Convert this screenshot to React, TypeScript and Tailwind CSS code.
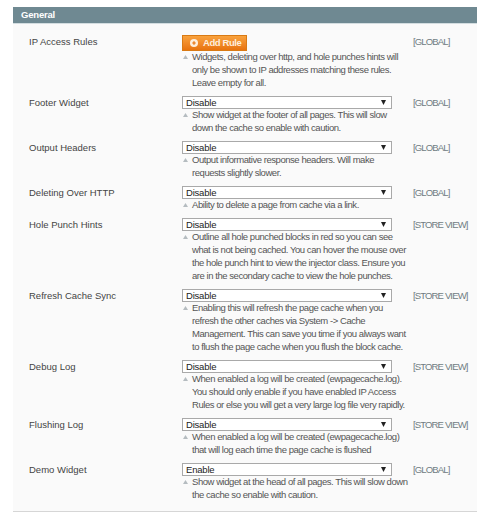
const rows = [
  {
    label: "IP Access Rules",
    scope: "[GLOBAL]",
    note: ["Widgets, deleting over http, and hole punches hints will", "only be shown to IP addresses matching these rules.", "Leave empty for all."],
  },
  {
    label: "Footer Widget",
    value: "Disable",
    scope: "[GLOBAL]",
    note: ["Show widget at the footer of all pages. This will slow", "down the cache so enable with caution."],
  },
  {
    label: "Output Headers",
    value: "Disable",
    scope: "[GLOBAL]",
    note: ["Output informative response headers. Will make", "requests slightly slower."],
  },
  {
    label: "Deleting Over HTTP",
    value: "Disable",
    scope: "[GLOBAL]",
    note: ["Ability to delete a page from cache via a link."],
  },
  {
    label: "Hole Punch Hints",
    value: "Disable",
    scope: "[STORE VIEW]",
    note: [
      "Outline all hole punched blocks in red so you can see",
      "what is not being cached. You can hover the mouse over",
      "the hole punch hint to view the injector class. Ensure you",
      "are in the secondary cache to view the hole punches.",
    ],
  },
  {
    label: "Refresh Cache Sync",
    value: "Disable",
    scope: "[STORE VIEW]",
    note: [
      "Enabling this will refresh the page cache when you",
      "refresh the other caches via System -> Cache",
      "Management. This can save you time if you always want",
      "to flush the page cache when you flush the block cache.",
    ],
  },
  {
    label: "Debug Log",
    value: "Disable",
    scope: "[STORE VIEW]",
    note: [
      "When enabled a log will be created (ewpagecache.log).",
      "You should only enable if you have enabled IP Access",
      "Rules or else you will get a very large log file very rapidly.",
    ],
  },
  {
    label: "Flushing Log",
    value: "Disable",
    scope: "[STORE VIEW]",
    note: ["When enabled a log will be created (ewpagecache.log)", "that will log each time the page cache is flushed"],
  },
  {
    label: "Demo Widget",
    value: "Enable",
    scope: "[GLOBAL]",
    note: ["Show widget at the head of all pages. This will slow down", "the cache so enable with caution."],
  },
];

function Select({ value }: { value: string }) {
  return (
    <div className="relative h-[13px] w-[210px]">
      <select
        defaultValue={value}
        className="block h-[13px] w-full appearance-none rounded-none border border-[#a9a9a9] bg-white pl-[3px] text-[9.5px] leading-[11px] tracking-[-0.2px] text-[#222]"
      >
        <option>{value}</option>
      </select>
      <svg className="absolute right-[6px] top-[4px]" width="5" height="5" viewBox="0 0 5 5">
        <path d="M0 0h5L2.5 5z" fill="#222" />
      </svg>
    </div>
  );
}

function AddRule() {
  return (
    <button className="flex h-[16px] w-[65px] items-center whitespace-nowrap border border-[#d97a14] bg-gradient-to-b from-[#f9a23c] to-[#e8730c] pl-[7px] text-[9.5px] font-bold tracking-[-0.4px] text-[#fdeedd]">
      <svg width="8" height="8" viewBox="0 0 9 9" className="mr-[5px] shrink-0">
        <circle cx="4.5" cy="4.5" r="4.5" fill="#fdeedd" />
        <path d="M4.5 2.5v4M2.5 4.5h4" stroke="#e8730c" strokeWidth="1.4" />
      </svg>
      Add Rule
    </button>
  );
}

export default function App() {
  return (
    <div className="h-[523px] w-[477px] overflow-hidden bg-white pt-[7px] pl-[13px] font-['Liberation_Sans',Arial,sans-serif]">
      <div className="flex h-[16px] items-center bg-[#6f8992] pl-[8px] text-[9.5px] font-bold tracking-[-0.2px] text-white">General</div>
      <div className="h-[489px] border-t border-b border-t-[#d3dde0] border-b-[#d6d6d6] bg-[#fafafa] pt-[11px] pl-[16px]">
        {rows.map((row) => (
          <div key={row.label} className="grid grid-cols-[153px_231px_1fr] pb-[6px]">
            <div className="text-[9.5px] leading-[13px] text-[#444]">{row.label}</div>
            <div>
              {row.value ? <Select value={row.value} /> : <AddRule />}
              <div className="relative -mt-[1px] mb-[1px] pl-[10px] text-[9.5px] leading-[13px] tracking-[-0.45px] text-[#555]">
                <svg className="absolute left-[1px] top-[5px]" width="5" height="4" viewBox="0 0 5 4">
                  <path d="M2.5 0L5 4H0z" fill="#b5bcc0" />
                </svg>
                {row.note.map((line) => (
                  <div key={line} className="whitespace-nowrap">{line}</div>
                ))}
              </div>
            </div>
            <div className="whitespace-nowrap text-[9.5px] leading-[13px] tracking-[-0.85px] text-[#6f7c82]">{row.scope}</div>
          </div>
        ))}
      </div>
    </div>
  );
}
